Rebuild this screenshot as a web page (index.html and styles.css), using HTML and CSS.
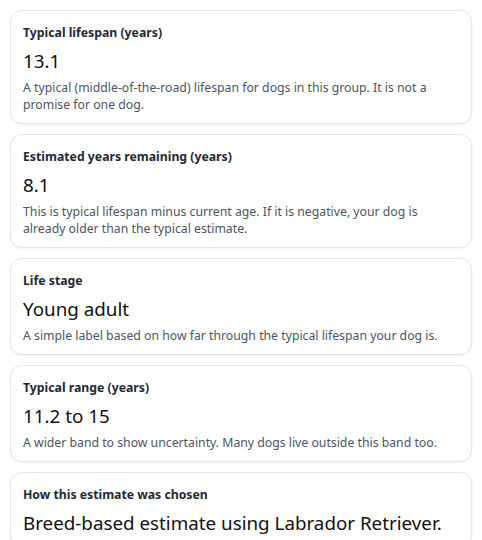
FILE: index.html
```html
<!DOCTYPE html>
<html lang="en">
<head>
<meta charset="utf-8">
<title>Dog lifespan estimate</title>
<link rel="stylesheet" href="styles.css">
</head>
<body>
<main class="results">
  <section class="card">
    <h3 class="card-title">Typical lifespan (years)</h3>
    <div class="card-value">13.1</div>
    <p class="card-desc">A typical (middle-of-the-road) lifespan for dogs in this group. It is not a promise for one dog.</p>
  </section>
  <section class="card">
    <h3 class="card-title">Estimated years remaining (years)</h3>
    <div class="card-value">8.1</div>
    <p class="card-desc">This is typical lifespan minus current age. If it is negative, your dog is already older than the typical estimate.</p>
  </section>
  <section class="card">
    <h3 class="card-title">Life stage</h3>
    <div class="card-value">Young adult</div>
    <p class="card-desc">A simple label based on how far through the typical lifespan your dog is.</p>
  </section>
  <section class="card">
    <h3 class="card-title">Typical range (years)</h3>
    <div class="card-value">11.2 to 15</div>
    <p class="card-desc">A wider band to show uncertainty. Many dogs live outside this band too.</p>
  </section>
  <section class="card">
    <h3 class="card-title">How this estimate was chosen</h3>
    <div class="card-value">Breed-based estimate using Labrador Retriever.</div>
  </section>
</main>
</body>
</html>
```

FILE: styles.css
```css
* { box-sizing: border-box; }
html, body { margin: 0; padding: 0; background: #ffffff; }
body {
  font-family: "Noto Sans", "Open Sans", sans-serif;
  color: #111827;
  overflow: hidden;
}
.results {
  display: flex;
  flex-direction: column;
  gap: 10px;
  padding: 10px;
  width: 482px;
}
.card {
  border: 1px solid #e3e5e8;
  border-radius: 12px;
  background: #fff;
  box-shadow: 0 1px 3px rgba(0, 0, 0, 0.06);
  padding: 13px 12px 10px 12px;
}
.card-title {
  margin: 0;
  font-size: 12.25px;
  font-weight: 700;
  line-height: 18px;
  color: #1f2937;
}
.card-value {
  margin-top: 6px;
  font-size: 18.8px;
  line-height: 26px;
  color: #111111;
}
.card-desc {
  margin: 5px 0 0 0;
  font-size: 12.25px;
  line-height: 17px;
  color: #4b5563;
}
```
